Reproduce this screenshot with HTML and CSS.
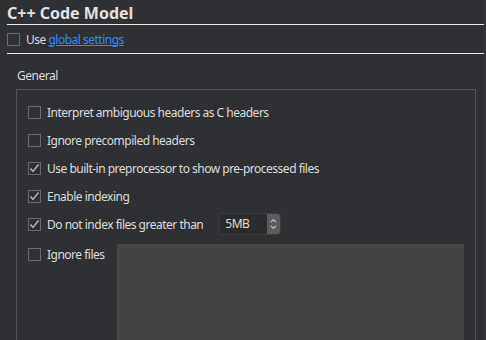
FILE: index.html
```html
<!DOCTYPE html>
<html>
<head>
<meta charset="utf-8">
<link rel="stylesheet" href="styles.css">
</head>
<body>
<div class="page">
  <h1 class="title">C++ Code Model</h1>
  <div class="rule"></div>
  <div class="use-row">
    <span class="cb"></span>
    <span class="label">Use <a class="link" href="#">global settings</a></span>
  </div>
  <div class="rule"></div>
  <div class="group-title">General</div>
  <div class="group">
    <div class="row"><span class="cb"></span><span class="label">Interpret ambiguous headers as C headers</span></div>
    <div class="row"><span class="cb"></span><span class="label">Ignore precompiled headers</span></div>
    <div class="row"><span class="cb checked"><svg viewBox="0 0 13 13" width="13" height="13"><polyline points="2.5,6.5 5,9.5 10.5,2.5" fill="none" stroke="#b8b8b8" stroke-width="1.4"/></svg></span><span class="label">Use built-in preprocessor to show pre-processed files</span></div>
    <div class="row"><span class="cb checked"><svg viewBox="0 0 13 13" width="13" height="13"><polyline points="2.5,6.5 5,9.5 10.5,2.5" fill="none" stroke="#b8b8b8" stroke-width="1.4"/></svg></span><span class="label">Enable indexing</span></div>
    <div class="row"><span class="cb checked"><svg viewBox="0 0 13 13" width="13" height="13"><polyline points="2.5,6.5 5,9.5 10.5,2.5" fill="none" stroke="#b8b8b8" stroke-width="1.4"/></svg></span><span class="label">Do not index files greater than</span>
      <div class="spin"><span class="spin-val">5MB</span><span class="spin-btn"><svg viewBox="0 0 13 20" width="13" height="20"><polyline points="4,8 6.5,5.5 9,8" fill="none" stroke="#bdbdbd" stroke-width="1.2"/><polyline points="4,12 6.5,14.5 9,12" fill="none" stroke="#bdbdbd" stroke-width="1.2"/></svg></span></div>
    </div>
    <div class="row ignore"><div class="ignore-left"><span class="cb"></span><span class="label">Ignore files</span></div><div class="textarea"></div></div>
  </div>
</div>
</body>
</html>
```

FILE: styles.css
```css
html, body {
  margin: 0;
  padding: 0;
  background: #2f3033;
  overflow: hidden;
}
body {
  width: 486px;
  height: 340px;
  font-family: "Noto Sans", "Open Sans", sans-serif;
  font-size: 12px;
  letter-spacing: -0.5px;
  color: #dcdcdc;
}
.page {
  padding: 0 1px 0 7px;
  border-right: 1px solid #3a3b3e;
  width: 477px;
  height: 340px;
}
.title {
  margin: 0;
  padding-top: 3px;
  height: 21px;
  font-size: 16px;
  line-height: 20px;
  font-weight: bold;
  letter-spacing: 0;
  color: #e2e2e2;
}
.rule {
  height: 1px;
  background: #ececec;
}
.use-row {
  display: flex;
  align-items: center;
  height: 28px;
  gap: 6px;
}
.cb {
  box-sizing: border-box;
  width: 13px;
  height: 13px;
  border: 1px solid #6a6a6a;
  flex: none;
  display: flex;
  align-items: center;
  justify-content: center;
}
.cb svg {
  display: block;
}
.cb.checked svg {
  margin: -1px;
}
.link {
  color: #2f8cff;
  text-decoration: underline;
}
.group-title {
  margin: 14px 0 0 10px;
  height: 21px;
  line-height: 16px;
}
.group {
  box-sizing: border-box;
  margin: 0 8px 0 9px;
  border: 1px solid #515151;
  border-bottom: none;
  height: 251px;
  padding: 8px 10px 0 11px;
}
.row {
  display: flex;
  align-items: center;
  gap: 6px;
  height: 28px;
}
.spin {
  margin-left: 10px;
  box-sizing: border-box;
  width: 62px;
  height: 22px;
  border: 1px solid #3b3b3b;
  border-radius: 2px;
  background: #2a2b2d;
  display: flex;
  align-items: stretch;
}
.spin-val {
  flex: 1;
  padding-left: 5px;
  line-height: 20px;
  color: #e0dcd0;
}
.spin-btn {
  width: 13px;
  background: #5b5b5b;
  border-radius: 0 2px 2px 0;
}
.spin-btn svg {
  display: block;
}
.row.ignore {
  margin-top: 6px;
  height: auto;
  align-items: flex-start;
  gap: 0;
}
.ignore-left {
  display: flex;
  align-items: center;
  gap: 6px;
  width: 89px;
  padding-top: 2px;
}
.textarea {
  width: 347px;
  height: 96px;
  background: #444444;
}
```
